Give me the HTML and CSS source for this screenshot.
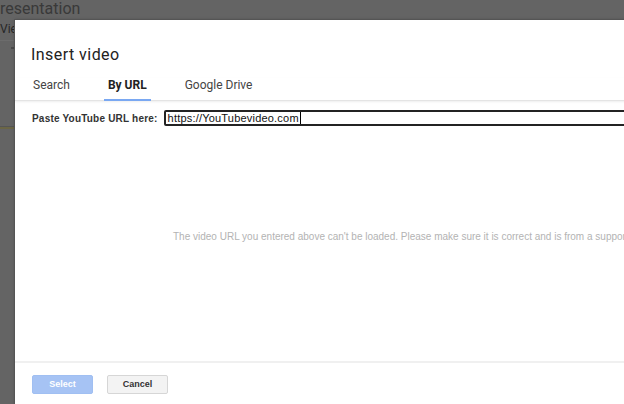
FILE: index.html
```html
<!DOCTYPE html>
<html lang="en">
<head>
<meta charset="utf-8">
<title>Insert video</title>
<link rel="stylesheet" href="styles.css">
</head>
<body>
<div class="app">
  <div class="app-title">presentation</div>
  <div class="app-menu">View</div>
  <div class="app-toolbar"><span class="tool-dot"></span></div>
  <div class="app-ruler"></div>
</div>

<div class="dialog" role="dialog" aria-label="Insert video">
  <h1 class="dialog-title">Insert video</h1>
  <div class="tabs">
    <div class="tab">Search</div>
    <div class="tab tab-active">By URL</div>
    <div class="tab">Google Drive</div>
  </div>
  <div class="dialog-body">
    <div class="url-row">
      <label class="url-label">Paste YouTube URL here:</label>
      <div class="url-input"><span class="url-text">https://YouTubevideo.com</span><span class="caret"></span></div>
    </div>
    <p class="message">The video URL you entered above can't be loaded. Please make sure it is correct and is from a supported site.</p>
  </div>
  <div class="dialog-footer">
    <button class="btn btn-primary" disabled>Select</button>
    <button class="btn btn-secondary">Cancel</button>
  </div>
</div>
</body>
</html>
```

FILE: styles.css
```css
* { box-sizing: border-box; }

html, body {
  margin: 0;
  width: 624px;
  height: 404px;
  overflow: hidden;
}

body {
  background: #646464;
  font-family: Roboto, "Liberation Sans", Arial, sans-serif;
  position: relative;
}

/* page behind the overlay */
.app-title {
  font-size: 16px;
  line-height: 18px;
  color: #393939;
  margin-left: -9px;
  white-space: nowrap;
}

.app-menu {
  font-size: 12px;
  line-height: 14px;
  color: #262626;
  margin-top: 4px;
  white-space: nowrap;
}

.app-toolbar {
  margin-top: 4px;
  height: 86px;
  border-top: 1px solid #6c6c6c;
}

.tool-dot {
  display: block;
  width: 3px;
  height: 2px;
  background: #4a4a4a;
  margin: 6px 0 0 11px;
}

.app-ruler {
  height: 3px;
  border-top: 1px solid #555555;
  background: #6b6646;
}

/* dialog */
.dialog {
  position: absolute;
  left: 15px;
  top: 20px;
  width: 760px;
  height: 400px;
  background: #ffffff;
  box-shadow: -1px -1px 0 #555555, 0 0 3px rgba(0, 0, 0, 0.35);
  display: flex;
  flex-direction: column;
}

.dialog-title {
  margin: 0;
  padding: 25px 16px 0;
  font-size: 16px;
  line-height: 20px;
  font-weight: 400;
  letter-spacing: 0.45px;
  color: #222222;
}

.tabs {
  margin-top: 13px;
  padding-left: 14px;
  display: flex;
  gap: 30px;
  border-bottom: 1px solid #e4e4e4;
  box-shadow: 0 1px 2px rgba(0, 0, 0, 0.07);
}

.tab {
  padding: 0 4px 7px;
  font-size: 12px;
  line-height: 14px;
  color: #444444;
  border-bottom: 2px solid transparent;
  margin-bottom: -1px;
}

.tab-active {
  font-weight: 700;
  color: #222222;
  border-bottom-color: #7aa8f2;
}

.dialog-body {
  flex: 1;
  padding: 9px 0 0 17px;
}

.url-row {
  display: flex;
  align-items: center;
  gap: 6px;
}

.url-label {
  font-family: "Liberation Sans", Arial, sans-serif;
  font-size: 10px;
  font-weight: 700;
  letter-spacing: 0.2px;
  color: #333333;
  white-space: nowrap;
}

.url-input {
  width: 600px;
  height: 16px;
  border: 2px solid #232323;
  border-radius: 2px;
  padding-left: 2px;
  display: flex;
  align-items: center;
  font-family: "Liberation Sans", Arial, sans-serif;
  font-size: 11px;
  letter-spacing: 0.2px;
  color: #111111;
  white-space: nowrap;
}

.caret {
  display: inline-block;
  width: 1px;
  height: 12px;
  background: #000000;
  margin-left: 1px;
}

.message {
  margin: 105px 0 0;
  padding-left: 141px;
  font-family: "Liberation Sans", Arial, sans-serif;
  font-size: 10px;
  line-height: 12px;
  color: #b3b3b3;
  white-space: nowrap;
}

.dialog-footer {
  height: 59px;
  border-top: 2px solid #f0f0f0;
  padding: 12px 17px 0;
  display: flex;
  gap: 14px;
  align-items: flex-start;
}

.btn {
  width: 61px;
  height: 19px;
  padding: 0;
  border-radius: 2px;
  font-family: "Liberation Sans", Arial, sans-serif;
  font-size: 9px;
  font-weight: 700;
  line-height: 17px;
}

.btn-primary {
  background: #a6c3f4;
  border: 1px solid #a0bff2;
  color: #ffffff;
}

.btn-secondary {
  background: #f3f3f3;
  border: 1px solid #d6d6d6;
  color: #333333;
}
```
